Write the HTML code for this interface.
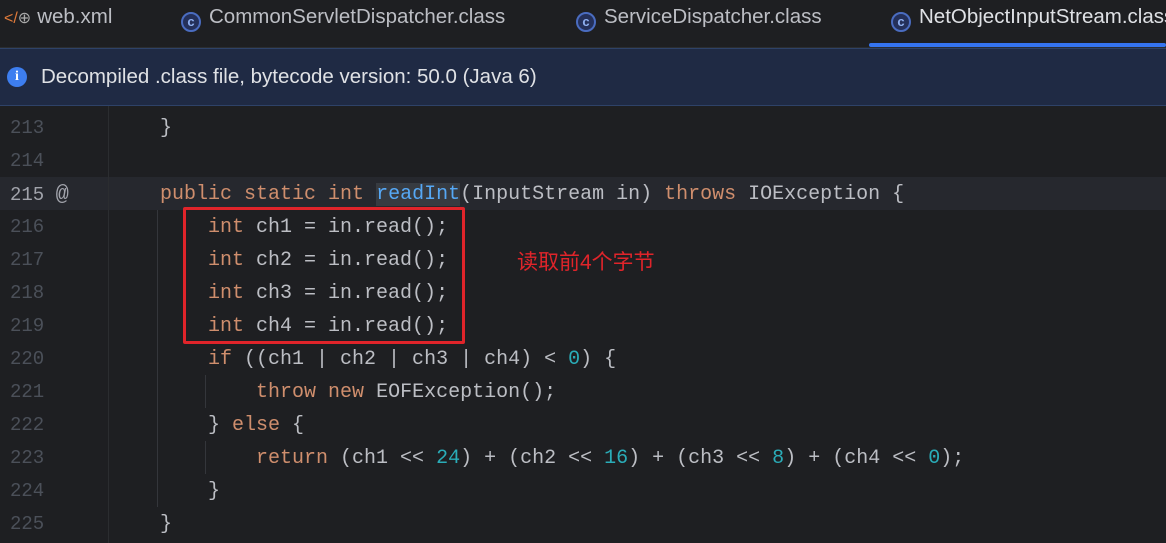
<!DOCTYPE html>
<html><head><meta charset="utf-8"><style>
*{margin:0;padding:0;box-sizing:border-box}
body{width:1166px;height:543px;overflow:hidden;background:#1e1f22;font-family:"Liberation Sans",sans-serif;position:relative}
.tabs{position:absolute;left:0;top:0;width:1166px;height:48px;background:#1e1f22;border-bottom:1px solid #2b2d30}
.tab{position:absolute;top:5px;font-size:20.5px;color:#bcbec4;white-space:nowrap}
.ci{display:inline-block;width:20px;height:20px;border-radius:50%;background:#24305a;border:2px solid #4a6cc0;vertical-align:-3px;margin-right:8px;color:#8fb0f0;font-size:13px;text-align:center;line-height:16px;font-weight:bold}
.ul{position:absolute;left:869px;top:43px;width:297px;height:4px;background:#3574f0;border-radius:2px}
.banner{position:absolute;left:0;top:48px;width:1166px;height:58px;background:#1f2a44;border-top:1px solid #2e4268;border-bottom:1px solid #2e4268}
.banner .t{position:absolute;left:41px;top:16px;font-size:20.5px;color:#dfe1e5}
.info{position:absolute;left:7px;top:18px;width:20px;height:20px;border-radius:50%;background:#3d7ef0;color:#fff;font-size:14px;font-weight:bold;text-align:center;line-height:20px;font-family:"Liberation Serif",serif}
.gsep{position:absolute;left:108px;top:106px;width:1px;height:437px;background:#2b2d30}
.ln{position:absolute;left:10px;font-family:"Liberation Mono",monospace;font-size:19px;color:#4b5059;line-height:33px}
.l{position:absolute;left:112px;font-family:"Liberation Mono",monospace;font-size:20px;color:#bcbec4;line-height:33px;white-space:pre}
.k{color:#cf8e6d}.n{color:#2aacb8}.m{color:#56a8f5}
.cur{position:absolute;left:0;top:177px;width:1166px;height:33px;background:#26282e}
.guide{position:absolute;width:1px;background:#34363b}
.box{position:absolute;left:183px;top:207px;width:282px;height:137px;border:3px solid #e0242a;border-radius:2px}
.note{position:absolute;left:517px;top:246px;color:#e0242a;font-size:21px;font-family:"Liberation Sans","Noto Sans CJK SC",sans-serif}
</style></head><body>
<div class="tabs">
<div class="tab" style="left:4px"><span style="color:#e07a3a;font-size:16px;margin-right:6px">&lt;/<span style="color:#aaa">⊕</span></span>web.xml</div>
<div class="tab" style="left:181px"><span class="ci">c</span>CommonServletDispatcher.class</div>
<div class="tab" style="left:576px"><span class="ci">c</span>ServiceDispatcher.class</div>
<div class="tab" style="left:891px;color:#dfe1e5"><span class="ci">c</span>NetObjectInputStream.class</div>
<div class="ul"></div>
</div>
<div class="banner"><div class="info">i</div><div class="t">Decompiled .class file, bytecode version: 50.0 (Java 6)</div></div>
<div class="cur"></div>
<div class="gsep"></div>
<div class="guide" style="left:157px;top:210px;height:297px"></div>
<div class="guide" style="left:205px;top:375px;height:33px"></div>
<div class="guide" style="left:205px;top:441px;height:33px"></div>

<div class="ln" style="top:112px">213</div>
<div class="ln" style="top:145px">214</div>
<div class="ln" style="top:178px;color:#a1a3ab">215 <span style="font-size:22px">@</span></div>
<div class="ln" style="top:211px">216</div>
<div class="ln" style="top:244px">217</div>
<div class="ln" style="top:277px">218</div>
<div class="ln" style="top:310px">219</div>
<div class="ln" style="top:343px">220</div>
<div class="ln" style="top:376px">221</div>
<div class="ln" style="top:409px">222</div>
<div class="ln" style="top:442px">223</div>
<div class="ln" style="top:475px">224</div>
<div class="ln" style="top:508px">225</div>

<div class="l" style="top:112px">    }</div>
<div class="l" style="top:178px">    <span class="k">public static int </span><span class="m" style="background:#373b41">readInt</span>(InputStream in) <span class="k">throws</span> IOException {</div>
<div class="l" style="top:211px">        <span class="k">int</span> ch1 = in.read();</div>
<div class="l" style="top:244px">        <span class="k">int</span> ch2 = in.read();</div>
<div class="l" style="top:277px">        <span class="k">int</span> ch3 = in.read();</div>
<div class="l" style="top:310px">        <span class="k">int</span> ch4 = in.read();</div>
<div class="l" style="top:343px">        <span class="k">if</span> ((ch1 | ch2 | ch3 | ch4) &lt; <span class="n">0</span>) {</div>
<div class="l" style="top:376px">            <span class="k">throw new</span> EOFException();</div>
<div class="l" style="top:409px">        } <span class="k">else</span> {</div>
<div class="l" style="top:442px">            <span class="k">return</span> (ch1 &lt;&lt; <span class="n">24</span>) + (ch2 &lt;&lt; <span class="n">16</span>) + (ch3 &lt;&lt; <span class="n">8</span>) + (ch4 &lt;&lt; <span class="n">0</span>);</div>
<div class="l" style="top:475px">        }</div>
<div class="l" style="top:508px">    }</div>

<div class="box"></div>
<div class="note">读取前4个字节</div>
</body></html>
